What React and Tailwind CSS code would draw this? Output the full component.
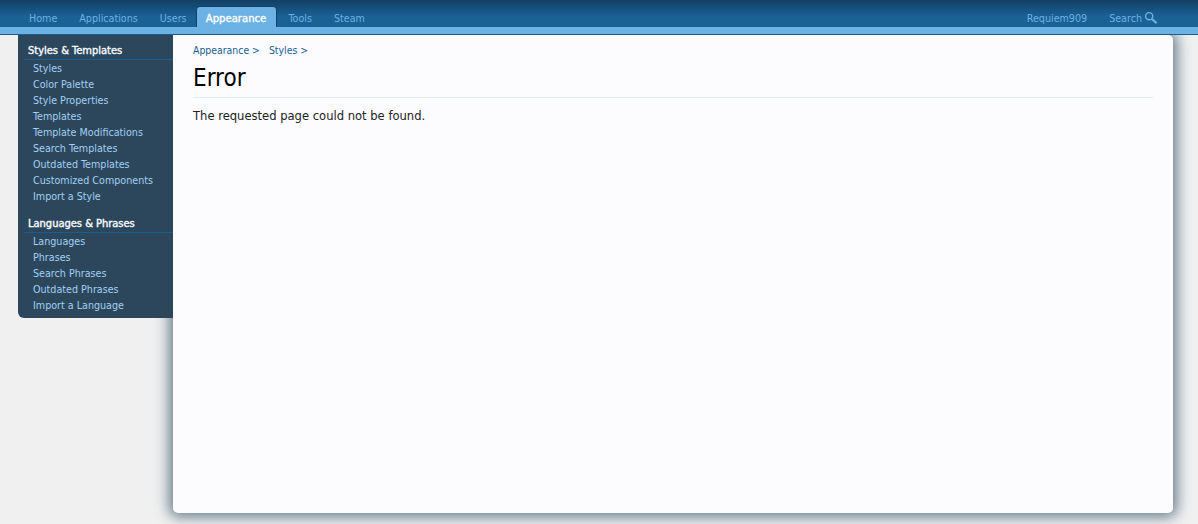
import React from "react";

const groups = [
  {
    title: "Styles & Templates",
    links: ["Styles", "Color Palette", "Style Properties", "Templates", "Template Modifications", "Search Templates", "Outdated Templates", "Customized Components", "Import a Style"],
  },
  {
    title: "Languages & Phrases",
    links: ["Languages", "Phrases", "Search Phrases", "Outdated Phrases", "Import a Language"],
  },
];

const App = () => {
  return (
    <div className="h-[524px] w-[1198px] overflow-hidden bg-[#f0f0f0] font-['DejaVu_Sans',sans-serif] [font-stretch:condensed]">
      {/* Top nav */}
      <div className="relative z-10">
        <div className="flex h-[27px] items-end justify-between bg-gradient-to-b from-[#123f63] to-[#1a6194] to-60% pl-[18px] pr-[40px]">
          <div className="flex h-[21px] items-stretch text-[10.65px] text-[#6cb2e4]">
            <a className="flex items-center px-[11px] pt-[5px]">Home</a>
            <a className="flex items-center px-[11px] pt-[5px]">Applications</a>
            <a className="flex items-center pl-[11px] pr-[9px] pt-[5px]">Users</a>
            <a className="flex w-[81px] items-center justify-center rounded-t-[4px] border border-b-0 border-[#123f63] bg-[#6cb2e4] pt-[5px] text-[11.2px] text-[#f8fbfe] [-webkit-text-stroke:0.4px_#f8fbfe]">Appearance</a>
            <a className="flex items-center pl-[12px] pr-[11px] pt-[5px]">Tools</a>
            <a className="flex items-center px-[11px] pt-[5px]">Steam</a>
          </div>
          <div className="flex h-[21px] items-center gap-[22px] pt-[5px] text-[10.65px] text-[#6cb2e4]">
            <a>Requiem909</a>
            <a className="flex items-center gap-[2px]">
              Search
              <svg className="-mt-[2px]" width="14" height="14" viewBox="0 0 15 15" fill="none" stroke="#6cb2e4">
                <circle cx="5.5" cy="5.5" r="3.8" strokeWidth="1.5" />
                <path d="M8.5 8.5l5 4.5" strokeWidth="2.2" />
              </svg>
            </a>
          </div>
        </div>
        <div className="h-[8px] border-b border-[#1a5d8f] bg-[#6cb2e4]" />
      </div>

      <div className="flex items-start pl-[18px]">
        {/* Sidebar */}
        <div className="relative z-10 h-[283px] w-[155px] rounded-bl-[6px] bg-[#2c475c] pt-[7px]">
          {groups.map((group) => (
            <div key={group.title} className="mb-[11px]">
              <div className="ml-[6px] h-[18px] border-b border-[#1a5d8f] pl-[4px] text-[11px] leading-[18px] text-[#f5f9fd] [-webkit-text-stroke:0.4px_#f5f9fd]">{group.title}</div>
              <ul>
                {group.links.map((link) => (
                  <li key={link} className="h-[16px] pl-[15px] text-[10.65px] leading-[18px] text-[#a3d0f2]">{link}</li>
                ))}
              </ul>
            </div>
          ))}
        </div>

        {/* Content */}
        <div className="h-[478px] w-[1000px] rounded-r-[5px] rounded-bl-[5px] bg-[#fcfcff] pt-[8px] pr-[20px] pl-[20px] shadow-[0_0_14px_4px_rgba(60,85,105,0.75)]">
          <div className="flex gap-[9px] text-[10.4px] leading-[14px] text-[#1a5d8f]">
            <span>Appearance &gt;</span>
            <span>Styles &gt;</span>
          </div>
          <h1 className="mt-[5px] h-[33px] text-[24px] leading-[33px] text-black">Error</h1>
          <div className="mt-[2px] h-px bg-[#e3ebf3]" />
          <p className="mt-[10px] text-[12.85px] leading-[16px] text-[#222]">The requested page could not be found.</p>
        </div>
      </div>
    </div>
  );
};

export default App;
